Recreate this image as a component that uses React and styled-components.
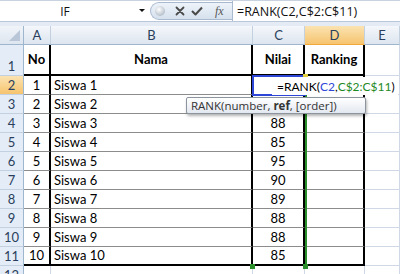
import styled, { createGlobalStyle } from "styled-components";

const GlobalStyle = createGlobalStyle`
  html, body { margin: 0; padding: 0; background: #fff; }
  body { font-family: "Lato", "Open Sans", sans-serif; }
`;

const COLS = ["A", "B", "C", "D", "E"];

const data = [
  { no: 1, nama: "Siswa 1", nilai: "" },
  { no: 2, nama: "Siswa 2", nilai: "" },
  { no: 3, nama: "Siswa 3", nilai: 88 },
  { no: 4, nama: "Siswa 4", nilai: 85 },
  { no: 5, nama: "Siswa 5", nilai: 95 },
  { no: 6, nama: "Siswa 6", nilai: 90 },
  { no: 7, nama: "Siswa 7", nilai: 89 },
  { no: 8, nama: "Siswa 8", nilai: 88 },
  { no: 9, nama: "Siswa 9", nilai: 88 },
  { no: 10, nama: "Siswa 10", nilai: 85 },
];

const Page = styled.div`
  width: 400px;
  height: 274px;
  overflow: hidden;
  background: #fff;
`;

const FormulaBar = styled.div`
  display: flex;
  height: 21px;
  border-top: 1px solid #c9d3df;
  box-sizing: border-box;
  background: #fff;
`;

const NameBox = styled.div`
  width: 150px;
  display: flex;
  align-items: center;
  position: relative;
  font-family: "Open Sans", sans-serif;
  font-size: 12px;
  color: #111;

  span {
    flex: 1;
    text-align: center;
    padding-right: 20px;
  }

  &::after {
    content: "";
    position: absolute;
    right: 5px;
    top: 8px;
    border-left: 3px solid transparent;
    border-right: 3px solid transparent;
    border-top: 3px solid #111;
  }
`;

const Pill = styled.div`
  width: 82px;
  margin: 1px 0;
  display: flex;
  align-items: center;
  border: 1px solid #a9bad0;
  border-right: none;
  border-radius: 10px 0 0 10px;
  background: linear-gradient(#eef3f9, #d6e1ee);
  box-sizing: border-box;
  padding-left: 4px;
  gap: 6px;
`;

const Ball = styled.div`
  width: 10px;
  height: 10px;
  border-radius: 50%;
  background: radial-gradient(circle at 40% 35%, #ffffff, #b9c2cc 70%);
  margin-right: 4px;
`;

const Fx = styled.span`
  font-family: "Liberation Serif", serif;
  font-style: italic;
  font-size: 12px;
  color: #555;
  margin-left: 6px;
`;

const FormulaInput = styled.div`
  flex: 1;
  display: flex;
  align-items: center;
  border-left: 1px solid #a9bad0;
  padding-left: 4px;
  font-family: "Open Sans", sans-serif;
  font-size: 12.5px;
  color: #111;
`;

const Band = styled.div`
  height: 5px;
  background: #e4ebf4;
  border-top: 1px solid #b9c7d8;
  box-sizing: border-box;
`;

const Sheet = styled.div`
  position: relative;
  display: grid;
  grid-template-columns: 24px 27px 202px 52px 60px 35px;
  grid-template-rows: 19px 31px repeat(11, 19px);
`;

const ColHead = styled.div`
  display: flex;
  align-items: center;
  justify-content: center;
  font-size: 13px;
  color: #2a3f5c;
  box-sizing: border-box;
  border-right: 1px solid #c3d0e0;
  border-bottom: 1px solid #9eb6ce;
  background: ${(p) =>
    p.$active
      ? "linear-gradient(#fbe3b2, #f6c46f)"
      : "linear-gradient(#f4f7fb, #dde5ef)"};
  ${(p) => p.$active && "border-bottom-color: #f2a93b;"}
`;

const Corner = styled.div`
  position: relative;
  background: linear-gradient(#f0f4f9, #dde5ef);
  border-right: 1px solid #9eb6ce;
  border-bottom: 1px solid #9eb6ce;
  box-sizing: border-box;

  &::after {
    content: "";
    position: absolute;
    right: 3px;
    bottom: 3px;
    border-left: 11px solid transparent;
    border-bottom: 11px solid #b8c6d8;
  }
`;

const RowHead = styled.div`
  display: flex;
  align-items: flex-end;
  justify-content: center;
  padding-bottom: 1px;
  font-size: 13px;
  color: #2a3f5c;
  box-sizing: border-box;
  border-right: 1px solid #9eb6ce;
  border-bottom: 1px solid #c3d0e0;
  background: ${(p) =>
    p.$active ? "linear-gradient(#fbe3b2, #f6c46f)" : "#e4ecf7"};
`;

const Cell = styled.div`
  display: flex;
  align-items: ${(p) => (p.$tall ? "center" : "flex-end")};
  justify-content: ${(p) =>
    p.$align === "left" ? "flex-start" : "center"};
  padding: 0 3px 1px;
  font-size: 13px;
  font-weight: ${(p) => (p.$bold ? 700 : 400)};
  color: #000;
  white-space: nowrap;
  box-sizing: border-box;
  border-right: ${(p) => p.$right};
  border-bottom: ${(p) => p.$bottom};
`;

const RefBox = styled.div`
  position: absolute;
  left: 252px;
  top: 49px;
  width: 54px;
  height: 21px;
  border: 2px solid #2d46d8;
  box-sizing: border-box;
`;

const RangeBox = styled.div`
  position: absolute;
  left: 252px;
  top: 49px;
  width: 55px;
  height: 192px;
  border-right: 2px solid #2a8f2a;
  box-sizing: border-box;
`;

const Handle = styled.div`
  position: absolute;
  width: 5px;
  height: 5px;
  background: ${(p) => p.$color};
  left: ${(p) => p.$x}px;
  top: ${(p) => p.$y}px;
`;

const EditText = styled.div`
  position: absolute;
  left: 272px;
  top: 51px;
  width: 126px;
  height: 18px;
  background: #fff;
  display: flex;
  align-items: center;
  padding-left: 5px;
  font-size: 12px;
  color: #000;
  white-space: nowrap;
  box-sizing: border-box;
`;

const Ref = styled.span`
  color: ${(p) => p.$color};
`;

const Tooltip = styled.div`
  position: absolute;
  left: 186px;
  top: 71px;
  width: 180px;
  height: 17px;
  display: flex;
  align-items: center;
  padding-left: 4px;
  font-family: "Open Sans", sans-serif;
  font-size: 11.5px;
  color: #333;
  border: 1px solid #8c949e;
  border-radius: 2px;
  background: linear-gradient(#ffffff, #e3e8f0);
  box-shadow: 1px 2px 3px rgba(0, 0, 0, 0.3);
  box-sizing: border-box;
  white-space: nowrap;

  b { font-weight: 700; }
`;

const thick = "2px solid #000";
const thin = "1px solid #8c8c8c";
const grid = "1px solid #d0d7e5";

function borders(row, col) {
  const inTable = row <= 11 && col <= 3;
  const right = inTable ? thick : grid;
  let bottom = grid;
  if (inTable) bottom = row === 1 || row === 11 ? thick : thin;
  return { right, bottom };
}

function CrossIcon() {
  return (
    <svg width="10" height="10" viewBox="0 0 10 10">
      <path d="M1.5 1.5 L8.5 8.5 M8.5 1.5 L1.5 8.5" stroke="#4a4a4a" strokeWidth="1.8" strokeLinecap="round" />
    </svg>
  );
}

function CheckIcon() {
  return (
    <svg width="12" height="10" viewBox="0 0 12 10">
      <path d="M1 5 L4.5 8.5 L11 1.5" stroke="#4a4a4a" strokeWidth="2" fill="none" strokeLinejoin="round" />
    </svg>
  );
}

export default function App() {
  const rows = [
    { no: "No", nama: "Nama", nilai: "Nilai", rank: "Ranking", head: true },
    ...data.map((d) => ({ ...d, rank: "" })),
    { no: "", nama: "", nilai: "", rank: "" },
  ];

  return (
    <Page>
      <GlobalStyle />
      <FormulaBar>
        <NameBox>
          <span>IF</span>
        </NameBox>
        <Pill>
          <Ball />
          <CrossIcon />
          <CheckIcon />
          <Fx>fx</Fx>
        </Pill>
        <FormulaInput>=RANK(C2,C$2:C$11)</FormulaInput>
      </FormulaBar>
      <Band />
      <Sheet>
        <Corner />
        {COLS.map((c) => (
          <ColHead key={c} $active={c === "D"}>
            {c}
          </ColHead>
        ))}
        {rows.map((r, i) => {
          const rowNum = i + 1;
          const values = [r.no, r.nama, r.nilai, r.rank, ""];
          return [
            <RowHead key={`h${rowNum}`} $active={rowNum === 2}>
              {rowNum}
            </RowHead>,
            ...values.map((v, ci) => {
              const b = borders(rowNum, ci);
              return (
                <Cell
                  key={`${rowNum}-${ci}`}
                  $align={ci === 1 && !r.head ? "left" : "center"}
                  $bold={r.head}
                  $tall={r.head}
                  $right={b.right}
                  $bottom={b.bottom}
                >
                  {v}
                </Cell>
              );
            }),
          ];
        })}
        <RangeBox />
        <RefBox />
        <Handle $color="#2a8f2a" $x={250} $y={238} />
        <Handle $color="#2a8f2a" $x={303} $y={238} />
        <Handle $color="#e0d040" $x={303} $y={48} />
        <EditText>
          =RANK(<Ref $color="#2d46d8">C2</Ref>,<Ref $color="#1f8a1f">C$2:C$11</Ref>)
        </EditText>
        <Tooltip>
          RANK(number,&nbsp;<b>ref</b>, [order])
        </Tooltip>
      </Sheet>
    </Page>
  );
}
